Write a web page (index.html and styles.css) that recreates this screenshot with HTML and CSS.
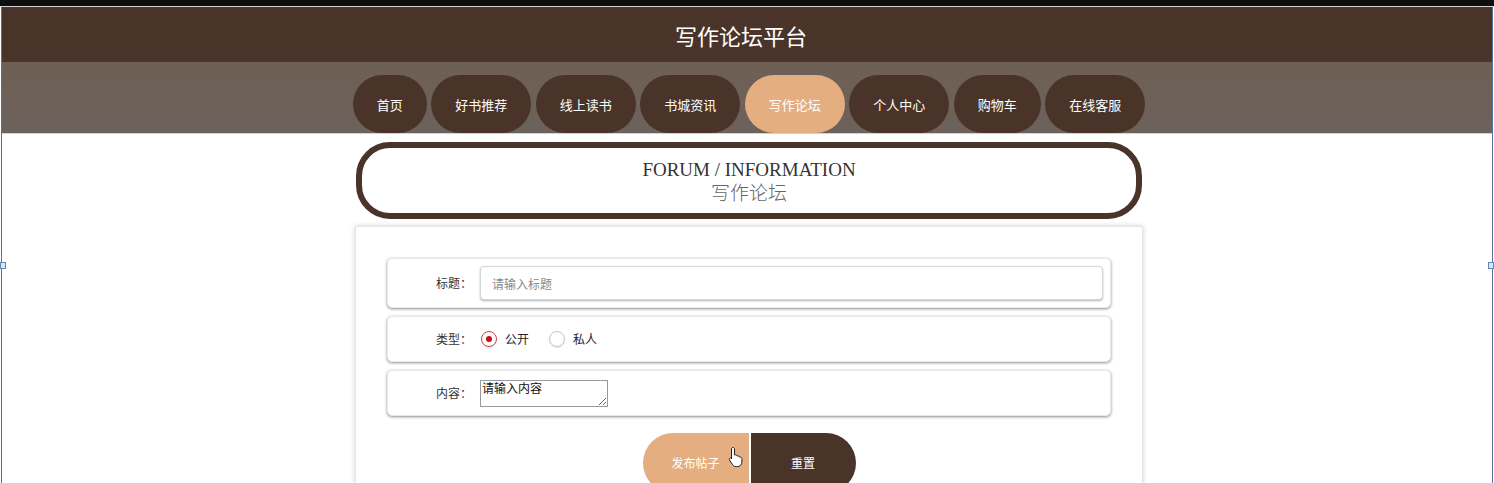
FILE: index.html
```html
<!DOCTYPE html>
<html lang="zh-CN">
<head>
<meta charset="utf-8">
<title>写作论坛平台</title>
<link rel="stylesheet" href="styles.css">
</head>
<body>
<div class="topbar"></div>
<div class="sepline"></div>
<div class="frame">
  <header class="header"><h1 class="site-title">写作论坛平台</h1></header>
  <div class="navband">
    <nav class="nav">
      <a class="pill">首页</a>
      <a class="pill">好书推荐</a>
      <a class="pill">线上读书</a>
      <a class="pill">书城资讯</a>
      <a class="pill active">写作论坛</a>
      <a class="pill">个人中心</a>
      <a class="pill">购物车</a>
      <a class="pill">在线客服</a>
    </nav>
  </div>
  <main class="main">
    <div class="titlebox">
      <div class="title-en">FORUM / INFORMATION</div>
      <div class="title-cn">写作论坛</div>
    </div>
    <section class="formbox">
      <div class="rows">
        <div class="row row-tall">
          <label class="label">标题：</label>
          <input class="text-input" type="text" placeholder="请输入标题">
        </div>
        <div class="row">
          <label class="label">类型：</label>
          <div class="radios">
            <span class="radio checked"></span><span class="radio-text">公开</span>
            <span class="radio"></span><span class="radio-text">私人</span>
          </div>
        </div>
        <div class="row">
          <label class="label">内容：</label>
          <textarea class="textarea">请输入内容</textarea>
        </div>
      </div>
      <div class="actions">
        <button class="btn btn-submit">发布帖子
          <svg class="cursor" width="16" height="22" viewBox="0 0 16 22"><path d="M5 1.5c.9 0 1.5.6 1.5 1.5v6l1-.2c.7-.1 1.4.3 1.5 1l.1.2 1-.1c.7 0 1.3.4 1.4 1l.1.3.8-.1c.8 0 1.5.6 1.5 1.4V16c0 2.6-2 4.6-4.6 4.6H8.2c-1.5 0-2.8-.7-3.6-1.9L1.5 14c-.4-.6-.3-1.4.3-1.8.6-.4 1.3-.3 1.7.2L3.5 13V3c0-.9.6-1.5 1.5-1.5z" fill="#fff" stroke="#222" stroke-width="1"/></svg>
        </button>
        <button class="btn btn-reset">重置</button>
      </div>
    </section>
  </main>
  <span class="handle handle-left"></span>
  <span class="handle handle-right"></span>
</div>
</body>
</html>
```
FILE: styles.css
```css
* { box-sizing: border-box; }
html, body { margin: 0; padding: 0; background: #fff; overflow: hidden; }
body {
  font-family: "Noto Sans CJK SC", "Noto Sans", "Liberation Sans", sans-serif;
  height: 483px;
}
.topbar { height: 6px; background: #0e0e0e; }
.sepline { height: 1px; background: #d4d4d4; }
.frame {
  position: relative;
  margin: 0 1px;
  border-left: 1px solid #52709a;
  border-right: 1px solid #52709a;
  height: 476px;
}
.header {
  height: 55px;
  background: #4a3429;
  display: flex;
  align-items: center;
  justify-content: center;
  padding-right: 12px;
}
.site-title {
  margin: 0;
  font-size: 22px;
  font-weight: 400;
  color: #fff;
  line-height: 1;
}
.navband {
  height: 72px;
  padding-top: 13px;
  background: linear-gradient(#6e5f54, #6c625c);
  border-bottom: 1px solid #d8d0c9;
  overflow: hidden;
}
.nav {
  display: flex;
  justify-content: center;
  gap: 4.5px;
  padding-left: 4px;
}
.pill {
  height: 58px;
  padding: 0 24px;
  border-radius: 29px;
  background: #4a3429;
  color: #fff;
  font-size: 13px;
  display: flex;
  align-items: center;
  line-height: 1;
}
.pill.active { background: #e5ae81; }
.main {
  display: flex;
  flex-direction: column;
  align-items: center;
  padding-left: 4px;
}
.titlebox {
  margin-top: 8px;
  width: 786px;
  height: 77px;
  border: 6px solid #4a3429;
  border-radius: 34px;
  display: flex;
  flex-direction: column;
  align-items: center;
  justify-content: center;
}
.title-en {
  font-family: "Liberation Serif", "Times New Roman", serif;
  font-size: 19px;
  color: #333;
  line-height: 22px;
}
.title-cn {
  font-family: "Noto Sans CJK SC", sans-serif;
  font-size: 19px;
  color: #666;
  line-height: 22px;
  font-weight: 300;
}
.formbox {
  margin-top: 7px;
  width: 788px;
  min-height: 300px;
  padding: 31px 31px 0;
  border: 1px solid #e6e6e6;
  box-shadow: 0 0 5px rgba(0,0,0,0.18);
  background: #fff;
}
.rows { display: flex; flex-direction: column; gap: 8px; }
.row {
  height: 46px;
  display: flex;
  align-items: center;
  border: 1px solid #e8e8e8;
  border-radius: 5px;
  box-shadow: 0 1px 3px rgba(0,0,0,0.45);
  background: #fff;
}
.row-tall { height: 50px; }
.label {
  width: 84px;
  text-align: right;
  font-size: 12px;
  color: #333;
  line-height: 1;
}
.text-input {
  margin-left: 8px;
  width: 623px;
  height: 34px;
  border: 1px solid #d6d6d6;
  border-radius: 4px;
  box-shadow: 0 1px 2px rgba(0,0,0,0.3);
  padding: 0 11px;
  font-family: inherit;
  font-size: 12px;
  color: #333;
  outline: none;
}
.text-input::placeholder { color: #8a8a8a; }
.radios {
  margin-left: 9px;
  display: flex;
  align-items: center;
}
.radio {
  width: 16px;
  height: 16px;
  border-radius: 50%;
  border: 1px solid #c4c4c4;
  box-shadow: 0 1px 1px rgba(0,0,0,0.1);
  display: flex;
  align-items: center;
  justify-content: center;
}
.radio.checked { border: 1.5px solid #cf3e42; }
.radio.checked::after {
  content: "";
  width: 6px;
  height: 6px;
  border-radius: 50%;
  background: #c40d14;
}
.radio-text {
  margin-left: 8px;
  margin-right: 20px;
  font-size: 12px;
  color: #222;
  line-height: 1;
}
.textarea {
  margin-left: 8px;
  width: 128px;
  height: 27px;
  border: 1px solid #9a9a9a;
  padding: 0 1px;
  font-family: inherit;
  font-size: 12px;
  line-height: 14px;
  color: #111;
  resize: both;
  outline: none;
}
.actions {
  margin-top: 17px;
  display: flex;
  justify-content: center;
  gap: 2px;
}
.btn {
  position: relative;
  height: 60px;
  border: none;
  color: #fff;
  font-family: inherit;
  font-size: 12px;
  line-height: 1;
}
.btn-submit {
  width: 106px;
  background: #e5ae81;
  border-radius: 30px 0 0 30px;
}
.btn-reset {
  width: 105px;
  background: #4a3429;
  border-radius: 0 30px 30px 0;
}
.cursor {
  position: absolute;
  left: 85px;
  top: 13px;
}
.handle {
  position: absolute;
  top: 255px;
  width: 6px;
  height: 7px;
  background: #cfe9f6;
  border: 1px solid #6686b0;
}
.handle-left { left: -2px; }
.handle-right { right: -2px; }
```
